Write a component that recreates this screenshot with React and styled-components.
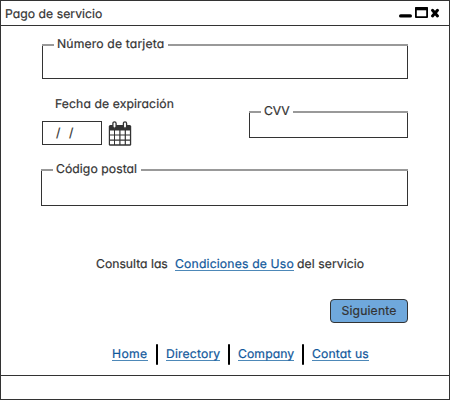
import React from "react";
import styled, { createGlobalStyle } from "styled-components";

const GlobalStyle = createGlobalStyle`
  *, *::before, *::after { box-sizing: border-box; }
  body {
    margin: 0;
    background: #fff;
    color: #333;
    font: 400 12.2px/16px Inter, "Liberation Sans", sans-serif;
    font-feature-settings: "cv11" 1, "calt" 0;
    text-rendering: geometricPrecision;
    -webkit-text-stroke: 0.2px currentColor;
  }
`;

const Window = styled.div`
  display: flex;
  flex-direction: column;
  width: 450px;
  height: 400px;
  border: 1px solid #333;
  overflow: hidden;
`;

const TitleBar = styled.header`
  display: flex;
  justify-content: space-between;
  height: 25px;
  padding: 5px 8px 0 4px;
  border-bottom: 1px solid #333;
`;

const WindowIcons = styled.svg`
  width: 44px;
  height: 14px;
`;

const Text = styled.span`
  white-space: pre;
  letter-spacing: ${(p) => p.$spacing || 0}px;
`;

const Form = styled.main`
  flex: 1;
  display: flex;
  flex-direction: column;
  padding: 18px 41px 0 40px;
`;

const Field = styled.label`
  display: flex;
  flex-direction: column;
  width: ${(p) => p.$width}px;
  height: ${(p) => p.$height}px;
  margin: ${(p) => p.$margin || "0"};
  border: solid #333;
  border-width: 0 1px 1px;
`;

const Legend = styled.span`
  display: flex;
  align-items: center;
  height: 2px;
  margin: 0 -1px;

  &::before, &::after {
    content: "";
    height: 2px;
    background: #999;
  }
  &::before { width: 12px; }
  &::after { flex: 1; }
`;

const LegendText = styled(Text)`
  width: ${(p) => p.$width}px;
  padding-left: 3px;
  margin-top: -2px;
`;

const CardRow = styled.div`
  display: flex;
  justify-content: space-between;
  margin-top: 17px;
  height: 73px;
`;

const Expiry = styled.div`
  padding-left: 1px;
`;

const ExpiryTitle = styled.div`
  padding-left: 13px;
`;

const DateRow = styled.div`
  display: flex;
  gap: 6px;
  margin-top: 9px;
`;

const DateBox = styled.div`
  width: 60px;
  height: 24px;
  padding: 3px 0 0 13px;
  border: 1px solid #333;
`;

const Calendar = styled.svg`
  width: 24px;
  height: 26px;
`;

const Terms = styled.p`
  display: flex;
  margin: 50px 0 0 55px;
`;

const Link = styled.a`
  height: 15px;
  width: ${(p) => p.$width}px;
  border-bottom: 1px solid #4d88b8;
  color: #11589b;
  text-decoration: none;
  white-space: nowrap;
  letter-spacing: ${(p) => p.$spacing || 0}px;
`;

const TermsLink = styled(Link)`
  margin-right: 3px;
`;

const TermsLead = styled(Text)`
  width: 79px;
`;

const NextButton = styled.button`
  align-self: flex-end;
  width: 78px;
  height: 24px;
  margin-top: 27px;
  padding: 0;
  border: 1px solid #333;
  border-radius: 4px;
  background: #6fa8dc;
  color: #333;
  font: inherit;
  font-feature-settings: inherit;
`;

const Links = styled.nav`
  display: flex;
  height: 21px;
  margin: 21px 0 0 71px;

  ${Link} { margin-top: 2px; }
`;

const Divider = styled.i`
  width: 2px;
  height: 21px;
  margin: 0 8px;
  border-radius: 1px;
  background: #000;
`;

const StatusBar = styled.footer`
  height: 24px;
  border-top: 1px solid #333;
`;

function LegendField({ label, labelWidth, spacing, ...box }) {
  return (
    <Field {...box}>
      <Legend>
        <LegendText $width={labelWidth} $spacing={spacing}>{label}</LegendText>
      </Legend>
    </Field>
  );
}

export default function App() {
  return (
    <>
      <GlobalStyle />
      <Window>
        <TitleBar>
          <Text $spacing={0.04}>Pago de servicio</Text>
          <WindowIcons viewBox="0 0 44 14">
            <path d="M3.7 9.9H13.3" stroke="#000" strokeWidth="3.4" strokeLinecap="round" />
            <path d="M18.9 2H30.1V11.1H18.9Z" fill="none" stroke="#000" strokeWidth="1.8" strokeLinejoin="round" />
            <path d="M18.5 2.7H30.5" stroke="#000" strokeWidth="3.2" />
            <path d="M35.5 4.3L40.5 9.9M40.5 4.3L35.5 9.9" stroke="#000" strokeWidth="3" strokeLinecap="round" />
          </WindowIcons>
        </TitleBar>
        <Form>
          <LegendField label="Número de tarjeta" labelWidth={114} spacing={0.15} $width={366} $height={35} $margin="0 0 0 1px" />
          <CardRow>
            <Expiry>
              <ExpiryTitle><Text $spacing={0.1}>Fecha de expiración</Text></ExpiryTitle>
              <DateRow>
                <DateBox><Text $spacing={0.6}>/  /</Text></DateBox>
                <Calendar viewBox="0 0 24 26">
                  <rect x="0.8" y="4" width="22.4" height="20.7" rx="1.5" fill="#333" />
                  <path
                    d="M2 9.5h4v4h-4zM7 9.5h4.3v4H7zM12.5 9.5h4.2v4h-4.2zM17.9 9.5h4v4h-4zM2 14.6h4v4h-4zM7 14.6h4.3v4H7zM12.5 14.6h4.2v4h-4.2zM17.9 14.6h4v4h-4zM2 19.7h4v3.6h-4zM7 19.7h4.3v3.6H7zM12.5 19.7h4.2v3.6h-4.2zM17.9 19.7h4v3.6h-4z"
                    fill="#fff"
                  />
                  <g fill="#fff" stroke="#333" strokeWidth="1.3">
                    <rect x="4.9" y="0.8" width="3.2" height="6.4" rx="1.6" />
                    <rect x="15.4" y="0.8" width="3.2" height="6.4" rx="1.6" />
                  </g>
                </Calendar>
              </DateRow>
            </Expiry>
            <LegendField label="CVV" labelWidth={32} spacing={-0.1} $width={159} $height={27} $margin="15px 0 0" />
          </CardRow>
          <LegendField label="Código postal" labelWidth={88} spacing={0.06} $width={367} $height={37} />
          <Terms>
            <TermsLead>Consulta las</TermsLead>
            <TermsLink href="#" $width={119} $spacing={0.16}>Condiciones de Uso</TermsLink>
            <Text $spacing={0.08}>del servicio</Text>
          </Terms>
          <NextButton><Text $spacing={0.15}>Siguiente</Text></NextButton>
          <Links>
            <Link href="#" $width={36} $spacing={0.35}>Home</Link>
            <Divider />
            <Link href="#" $width={54} $spacing={0.15}>Directory</Link>
            <Divider />
            <Link href="#" $width={56} $spacing={0.08}>Company</Link>
            <Divider />
            <Link href="#" $width={57} $spacing={0.12}>Contat us</Link>
          </Links>
        </Form>
        <StatusBar />
      </Window>
    </>
  );
}
